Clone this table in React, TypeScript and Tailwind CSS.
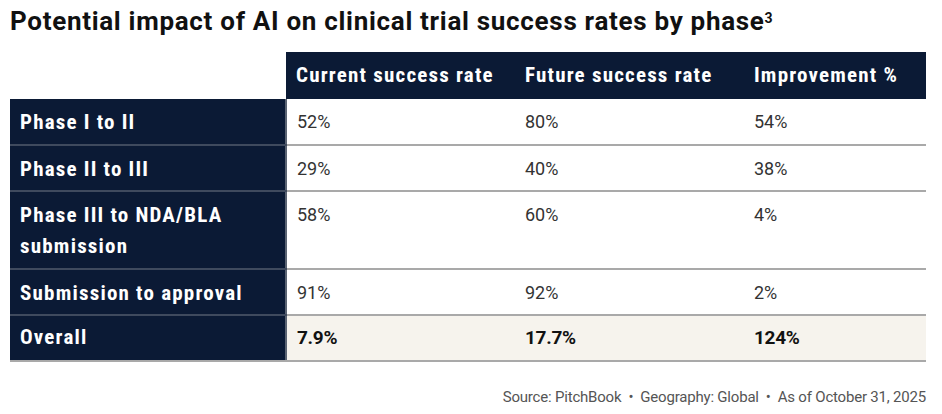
const ROWS = [
  { label: 'Phase I to II', current: '52%', future: '80%', improvement: '54%' },
  { label: 'Phase II to III', current: '29%', future: '40%', improvement: '38%' },
  { label: 'Phase III to NDA/BLA submission', current: '58%', future: '60%', improvement: '4%' },
  { label: 'Submission to approval', current: '91%', future: '92%', improvement: '2%' },
];

const TOTAL = { label: 'Overall', current: '7.9%', future: '17.7%', improvement: '124%' };

export default function App() {
  return (
    <div className="w-[942px] h-[414px] bg-white px-[10px] pt-[5px] font-['Roboto',sans-serif] text-[#222]">
      <h1 className="text-[26px] font-bold leading-[32px] tracking-[0.7px] text-[#111]">
        Potential impact of AI on clinical trial success rates by phase<sup className="text-[14px] font-bold">3</sup>
      </h1>

      <table className="mt-[15px] w-[916px] border-collapse table-fixed">
        <colgroup>
          <col className="w-[276px]" />
          <col className="w-[229px]" />
          <col className="w-[229px]" />
          <col className="w-[182px]" />
        </colgroup>
        <thead>
          <tr className="h-[47px]">
            <th />
            {['Current success rate', 'Future success rate', 'Improvement %'].map((h) => (
              <th
                key={h}
                className="bg-[#0b1a35] px-[10px] text-left align-middle text-[21px] font-bold text-white [font-stretch:condensed] tracking-[1.2px]"
              >
                {h}
              </th>
            ))}
          </tr>
        </thead>
        <tbody>
          {ROWS.map((r, i) => (
            <tr key={r.label} className={i === 2 ? 'h-[78px]' : 'h-[46px]'}>
              <td className="border-b-2 border-r-2 border-b-[#3f4a5e] border-r-[#5a6372] bg-[#0b1a35] px-[10px] pt-[8px] align-top text-[21px] font-bold leading-[31px] text-white [font-stretch:condensed] tracking-[1.2px]">
                <div className="w-[230px]">{r.label}</div>
              </td>
              <td className="border-b-2 border-[#a9a9a9] px-[10px] pt-[9px] align-top text-[18px] leading-[28px] text-[#333]">{r.current}</td>
              <td className="border-b-2 border-[#a9a9a9] px-[10px] pt-[9px] align-top text-[18px] leading-[28px] text-[#333]">{r.future}</td>
              <td className="border-b-2 border-[#a9a9a9] px-[10px] pt-[9px] align-top text-[18px] leading-[28px] text-[#333]">{r.improvement}</td>
            </tr>
          ))}
          <tr className="h-[46px]">
            <td className="border-b-2 border-r-2 border-b-[#a9a9a9] border-r-[#5a6372] bg-[#0b1a35] px-[10px] align-middle text-[21px] font-bold text-white [font-stretch:condensed] tracking-[1.2px]">
              {TOTAL.label}
            </td>
            <td className="border-b-2 border-[#a9a9a9] bg-[#f6f3ed] px-[10px] align-middle text-[19px] font-bold text-[#111] tracking-[-0.3px]">{TOTAL.current}</td>
            <td className="border-b-2 border-[#a9a9a9] bg-[#f6f3ed] px-[10px] align-middle text-[19px] font-bold text-[#111] tracking-[-0.3px]">{TOTAL.future}</td>
            <td className="border-b-2 border-[#a9a9a9] bg-[#f6f3ed] px-[10px] align-middle text-[19px] font-bold text-[#111] tracking-[-0.3px]">{TOTAL.improvement}</td>
          </tr>
        </tbody>
      </table>

      <div className="mt-[24px] w-[916px] text-right text-[15px] text-[#555] tracking-[-0.2px]">
        Source: PitchBook&nbsp;&nbsp;•&nbsp;&nbsp;Geography: Global&nbsp;&nbsp;•&nbsp;&nbsp;As of October 31, 2025
      </div>
    </div>
  );
}
